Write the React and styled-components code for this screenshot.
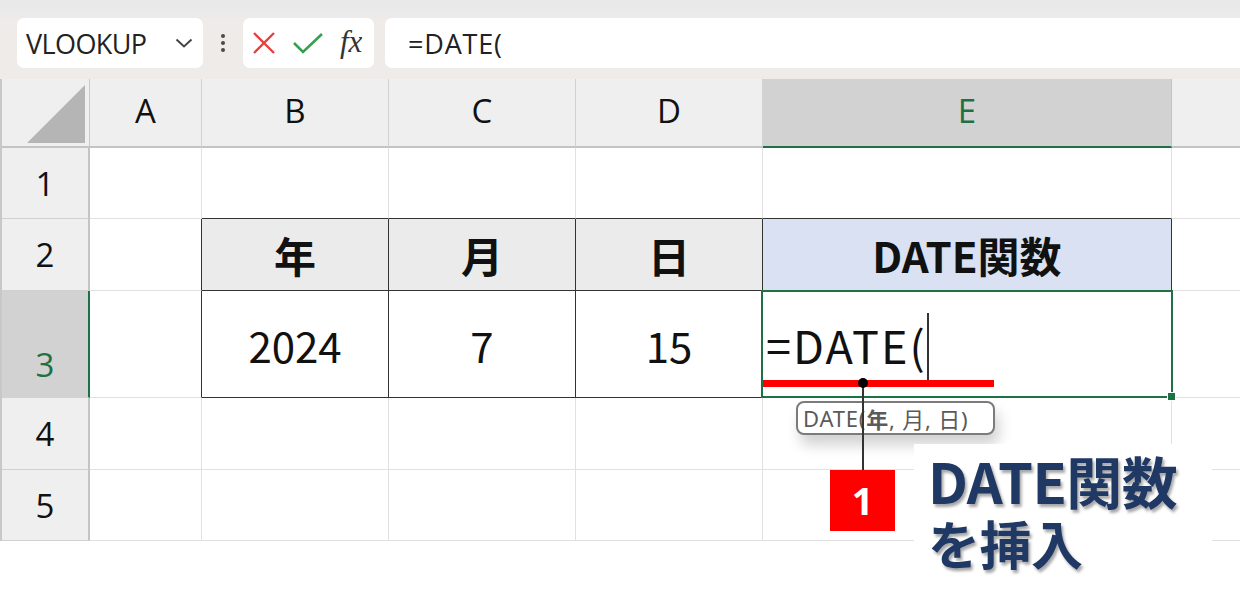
import React from 'react';
import styled, { createGlobalStyle } from 'styled-components';

const GlobalStyle = createGlobalStyle`
  html, body {
    margin: 0;
    padding: 0;
    background: #fff;
  }
  * {
    box-sizing: border-box;
  }
`;

const Page = styled.div`
  width: 1240px;
  height: 615px;
  overflow: hidden;
  background: #fff;
  font-family: 'Noto Sans', 'Open Sans', 'Noto Sans CJK JP', sans-serif;
`;

const FormulaBar = styled.div`
  height: 81px;
  display: flex;
  align-items: flex-start;
  padding: 18px 0 0 17px;
  background: linear-gradient(to bottom, #e9e9ea 0px, #eceaea 17px, #eeebe8 18px, #eeebe8 100%);
  border-top: 2px solid #cfcfcf;
  margin-top: -2px;
`;

const NameBox = styled.div`
  width: 186px;
  height: 50px;
  background: #fff;
  border-radius: 7px;
  display: flex;
  align-items: center;
  justify-content: space-between;
  padding: 0 10px 0 9px;
  font-family: 'Open Sans', 'Noto Sans', sans-serif;
  font-size: 27px;
  color: #222;
  letter-spacing: -0.6px;
`;

const Dots = styled.div`
  width: 40px;
  height: 50px;
  display: flex;
  flex-direction: column;
  align-items: center;
  justify-content: center;
  gap: 3px;

  span {
    width: 4px;
    height: 4px;
    border-radius: 50%;
    background: #4a4a4a;
  }
`;

const IconBox = styled.div`
  width: 131px;
  height: 50px;
  background: #fff;
  border-radius: 7px;
  display: flex;
  align-items: center;
  padding: 0 0 0 9px;
  gap: 16px;
`;

const Fx = styled.span`
  font-family: 'Liberation Serif', 'DejaVu Serif', serif;
  font-style: italic;
  font-weight: 400;
  font-size: 31px;
  color: #333;
  margin-top: -2px;
`;

const FormulaInput = styled.div`
  flex: 1;
  height: 50px;
  margin-left: 11px;
  background: #fff;
  border-radius: 7px 0 0 7px;
  display: flex;
  align-items: center;
  padding-left: 23px;
  font-family: 'Open Sans', 'Noto Sans', sans-serif;
  font-size: 27px;
  letter-spacing: 0.8px;
  color: #222;
`;

const Sheet = styled.div`
  position: relative;
  display: grid;
  grid-template-columns: 88px 112px 187px 187px 187px 409px 70px;
  grid-template-rows: 69px 71px 72px 107px 72px 71px;
  border-left: 2px solid #c8c8c8;
`;

const Corner = styled.div`
  background: #efefef;
  border-right: 1px solid #c8c8c8;
  border-bottom: 2px solid #c4c4c4;
  position: relative;

  &::after {
    content: '';
    position: absolute;
    right: 4px;
    bottom: 3px;
    width: 0;
    height: 0;
    border-left: 58px solid transparent;
    border-bottom: 58px solid #b5b5b5;
  }
`;

const ColHead = styled.div`
  background: ${p => (p.$active ? '#d2d2d2' : '#efefef')};
  border-right: 1px solid ${p => (p.$active ? '#c4c4c4' : '#d2d2d2')};
  border-bottom: 2px solid ${p => (p.$active ? '#1e7145' : '#c4c4c4')};
  color: ${p => (p.$active ? '#1e7145' : '#111')};
  display: flex;
  align-items: center;
  justify-content: center;
  font-family: 'Open Sans', 'Noto Sans', sans-serif;
  font-size: 33px;
  padding-bottom: 4px;
`;

const RowHead = styled.div`
  background: ${p => (p.$active ? '#d2d2d2' : '#efefef')};
  border-right: 2px solid ${p => (p.$active ? '#1e7145' : '#c4c4c4')};
  border-bottom: 1px solid ${p => (p.$active ? '#d2d2d2' : '#d0d0d0')};
  color: ${p => (p.$active ? '#1e7145' : '#111')};
  display: flex;
  align-items: ${p => (p.$active ? 'flex-end' : 'center')};
  justify-content: center;
  padding-bottom: ${p => (p.$active ? '10px' : '0')};
  font-family: 'Open Sans', 'Noto Sans', sans-serif;
  font-size: 33px;
`;

const Cell = styled.div`
  background: ${p => p.$bg || '#fff'};
  border-right: 1px solid ${p => p.$r || '#e1e1e1'};
  border-bottom: ${p => (p.$b ? `1.5px solid ${p.$b}` : '1px solid #e1e1e1')};
  display: flex;
  align-items: center;
  justify-content: ${p => (p.$left ? 'flex-start' : 'center')};
  padding-left: ${p => (p.$left ? '3px' : '0')};
  font-family: 'Noto Sans CJK JP', 'Noto Sans', sans-serif;
  font-size: ${p => (p.$big ? '45px' : '42px')};
  font-weight: ${p => (p.$bold ? 700 : 400)};
  color: #111;
  position: relative;
  letter-spacing: ${p => (p.$big ? '2px' : '0')};
`;

const Caret = styled.span`
  display: inline-block;
  width: 2px;
  height: 68px;
  background: #333;
  margin-top: 6px;
`;

const Selection = styled.div`
  position: absolute;
  left: 759px;
  top: 211px;
  width: 412px;
  height: 108px;
  border: 2px solid #1e7145;

  &::after {
    content: '';
    position: absolute;
    right: -5px;
    bottom: -5px;
    width: 7px;
    height: 7px;
    background: #1e7145;
    border: 1px solid #fff;
  }
`;

const RedBar = styled.div`
  position: absolute;
  left: 761px;
  top: 301px;
  width: 231px;
  height: 7px;
  background: #ff0000;
`;

const Dot = styled.div`
  position: absolute;
  left: 856px;
  top: 299px;
  width: 10px;
  height: 10px;
  border-radius: 50%;
  background: #000;
`;

const Leader = styled.div`
  position: absolute;
  left: 860px;
  top: 304px;
  width: 1.5px;
  height: 88px;
  background: #333;
`;

const Tooltip = styled.div`
  position: absolute;
  left: 794px;
  top: 322px;
  width: 199px;
  height: 34px;
  padding: 0 0 0 5px;
  border: 2px solid #7b7b7b;
  border-radius: 8px;
  background: #fff;
  box-shadow: 4px 10px 14px rgba(0, 0, 0, 0.18);
  display: flex;
  align-items: center;
  font-family: 'Noto Sans', 'Noto Sans CJK JP', sans-serif;
  font-size: 22px;
  color: #5a5a5a;
  white-space: nowrap;
  letter-spacing: 0.8px;

  b {
    font-family: 'Noto Sans CJK JP', sans-serif;
    font-weight: 700;
  }
`;

const Badge = styled.div`
  position: absolute;
  left: 828px;
  top: 391px;
  width: 65px;
  height: 61px;
  background: #ff0000;
  color: #fff;
  display: flex;
  align-items: center;
  justify-content: center;
  font-family: 'Noto Sans', 'Open Sans', sans-serif;
  font-weight: 700;
  font-size: 38px;
  padding-bottom: 2px;
`;

const Callout = styled.div`
  position: absolute;
  left: 912px;
  top: 365px;
  width: 298px;
  height: 170px;
  background: #fff;
  padding: 3px 0 0 14px;
  font-family: 'Noto Sans CJK JP', 'Noto Sans', sans-serif;
  font-weight: 700;
  color: #203864;
  text-shadow: 2px 3px 3px rgba(0, 0, 0, 0.35);
`;

const CalloutLine = styled.div`
  font-size: ${p => p.$size}px;
  line-height: ${p => p.$lh}px;
  white-space: nowrap;
  letter-spacing: -0.5px;
`;

const cols = ['A', 'B', 'C', 'D', 'E', ''];

const XIcon = () => (
  <svg width="24" height="24" viewBox="0 0 24 24">
    <path d="M2 2 L22 22 M22 2 L2 22" stroke="#e8403c" strokeWidth="2.4" fill="none" />
  </svg>
);

const CheckIcon = () => (
  <svg width="32" height="22" viewBox="0 0 32 22">
    <path d="M2 11 L11 20 L30 2" stroke="#35a150" strokeWidth="2.6" fill="none" />
  </svg>
);

const Chevron = () => (
  <svg width="18" height="10" viewBox="0 0 18 10">
    <path d="M1.5 1.5 L9 8.5 L16.5 1.5" stroke="#444" strokeWidth="2" fill="none" />
  </svg>
);

const dark = '#333';

function cellProps(r, c) {
  // r: 1..5, c: 0..5 (A..F)
  const p = {};
  const inTable = (r === 2 || r === 3) && c >= 1 && c <= 4;
  if (inTable) {
    p.$r = dark;
    p.$b = dark;
  }
  if ((r === 2 || r === 3) && c === 0) p.$r = dark;
  if (r === 1 && c >= 1 && c <= 4) p.$b = dark;
  if (r === 2 && c >= 1 && c <= 3) p.$bg = '#ebebeb';
  if (r === 2 && c === 4) p.$bg = '#d9e1f2';
  if (r === 2) p.$bold = true;
  return p;
}

const content = {
  '2-1': '年',
  '2-2': '月',
  '2-3': '日',
  '2-4': 'DATE関数',
  '3-1': '2024',
  '3-2': '7',
  '3-3': '15',
};

export default function App() {
  return (
    <Page>
      <GlobalStyle />
      <FormulaBar>
        <NameBox>
          <span>VLOOKUP</span>
          <Chevron />
        </NameBox>
        <Dots>
          <span />
          <span />
          <span />
        </Dots>
        <IconBox>
          <XIcon />
          <CheckIcon />
          <Fx>fx</Fx>
        </IconBox>
        <FormulaInput>=DATE(</FormulaInput>
      </FormulaBar>

      <Sheet>
        <Corner />
        {cols.map((c, i) => (
          <ColHead key={i} $active={c === 'E'}>{c}</ColHead>
        ))}
        {[1, 2, 3, 4, 5].map(r => (
          <React.Fragment key={r}>
            <RowHead $active={r === 3}>{r}</RowHead>
            {cols.map((_, c) => {
              const isFormula = r === 3 && c === 4;
              return (
                <Cell key={c} {...cellProps(r, c)} $left={isFormula} $big={isFormula}>
                  {isFormula ? (
                    <>
                      =DATE(
                      <Caret />
                    </>
                  ) : (
                    content[`${r}-${c}`]
                  )}
                </Cell>
              );
            })}
          </React.Fragment>
        ))}

        <Selection />
        <RedBar />
        <Tooltip>
          DATE(<b>年</b>, 月, 日)
        </Tooltip>
        <Leader />
        <Dot />
        <Badge>1</Badge>
        <Callout>
          <CalloutLine $size={56} $lh={66}>DATE関数</CalloutLine>
          <CalloutLine $size={52} $lh={60}>を挿入</CalloutLine>
        </Callout>
      </Sheet>
    </Page>
  );
}
